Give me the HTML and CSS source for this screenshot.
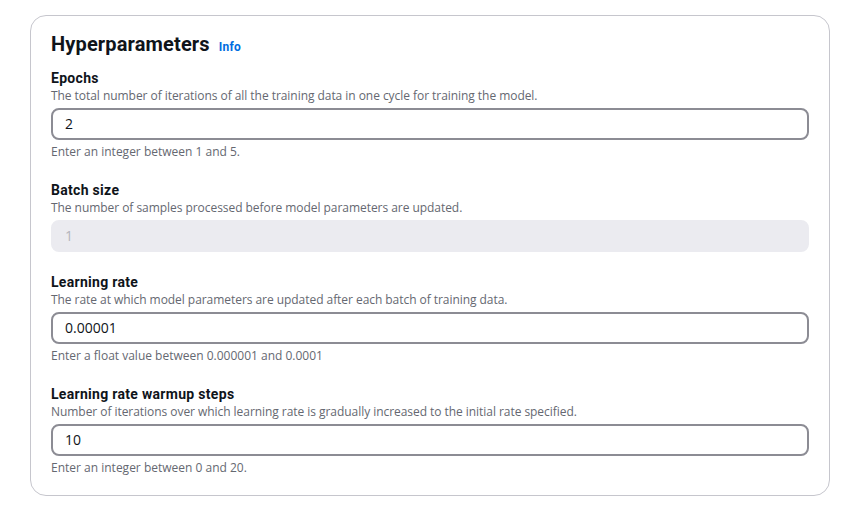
FILE: index.html
```html
<!DOCTYPE html>
<html>
<head>
<meta charset="utf-8">
<link rel="stylesheet" href="styles.css">
</head>
<body>
<div class="card">
  <div class="header">
    <h2 class="title">Hyperparameters</h2>
    <a class="info">Info</a>
  </div>
  <div class="fields">
    <div class="field">
      <div class="label">Epochs</div>
      <div class="desc">The total number of iterations of all the training data in one cycle for training the model.</div>
      <div class="input">2</div>
      <div class="constraint">Enter an integer between 1 and 5.</div>
    </div>
    <div class="field">
      <div class="label">Batch size</div>
      <div class="desc">The number of samples processed before model parameters are updated.</div>
      <div class="input disabled">1</div>
    </div>
    <div class="field">
      <div class="label">Learning rate</div>
      <div class="desc">The rate at which model parameters are updated after each batch of training data.</div>
      <div class="input">0.00001</div>
      <div class="constraint">Enter a float value between 0.000001 and 0.0001</div>
    </div>
    <div class="field">
      <div class="label">Learning rate warmup steps</div>
      <div class="desc">Number of iterations over which learning rate is gradually increased to the initial rate specified.</div>
      <div class="input">10</div>
      <div class="constraint">Enter an integer between 0 and 20.</div>
    </div>
  </div>
</div>
</body>
</html>
```
FILE: styles.css
```css
html, body {
  margin: 0;
  padding: 0;
  background: #ffffff;
}
body {
  font-family: "Open Sans", "Noto Sans", sans-serif;
  color: #0f141a;
  padding: 15px 25px 0 30px;
}
.card {
  border: 1px solid #c6c6cd;
  border-radius: 16px;
  padding: 16px 20px 19px 20px;
}
.header {
  display: flex;
  align-items: baseline;
  gap: 9px;
  margin-bottom: 12px;
}
.title {
  margin: 0;
  font-family: "Roboto", "Open Sans", sans-serif;
  font-size: 20px;
  font-weight: 700;
  line-height: 24px;
  letter-spacing: 0.15px;
}
.info {
  color: #006ce0;
  font-size: 12px;
  font-weight: 700;
  font-family: "Roboto", "Open Sans", sans-serif;
  letter-spacing: 0.2px;
}
.fields {
  display: flex;
  flex-direction: column;
  gap: 20px;
}
.label {
  font-family: "Roboto", "Open Sans", sans-serif;
  font-size: 14px;
  font-weight: 700;
  line-height: 20px;
  letter-spacing: 0.3px;
}
.desc {
  font-size: 12px;
  line-height: 16px;
  color: #656871;
  margin-bottom: 4px;
  letter-spacing: -0.05px;
}
.input {
  height: 32px;
  box-sizing: border-box;
  border: 2px solid #8c8c94;
  border-radius: 8px;
  padding: 0 12px;
  font-size: 14px;
  line-height: 28px;
  color: #0f141a;
}
.input.disabled {
  background: #ebebf0;
  border-color: #ebebf0;
  color: #b4b4bb;
}
.constraint {
  font-size: 12px;
  line-height: 16px;
  color: #656871;
  margin-top: 4px;
}
```
